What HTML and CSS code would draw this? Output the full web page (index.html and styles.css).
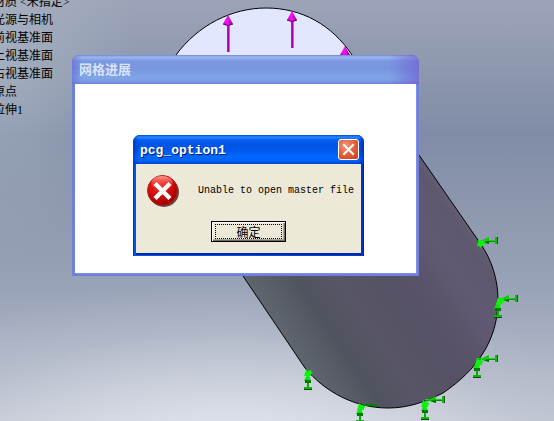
FILE: index.html
```
<!DOCTYPE html>
<html lang="zh-CN">
<head>
  <meta charset="UTF-8" />
  <meta name="viewport" content="width=device-width, initial-scale=1.0" />
  <title>网格进展</title>
  <link rel="stylesheet" href="styles.css">
</head>
<body>
  <!-- 3D model -->
  <svg class="model" width="554" height="421" viewBox="0 0 554 421" aria-hidden="true">
    <defs>
      <linearGradient id="side" gradientUnits="userSpaceOnUse" x1="275" y1="325" x2="455" y2="205">
        <stop offset="0" stop-color="#60666f" />
        <stop offset="0.2" stop-color="#50545f" />
        <stop offset="0.35" stop-color="#575566" />
        <stop offset="0.6" stop-color="#565165" />
        <stop offset="0.82" stop-color="#605972" />
        <stop offset="0.95" stop-color="#5e586f" />
        <stop offset="1" stop-color="#625d72" />
      </linearGradient>
      <linearGradient id="cone" x1="0" x2="1" y1="0" y2="0">
        <stop offset="0" stop-color="#c000c0" />
        <stop offset="0.4" stop-color="#ff10ff" />
        <stop offset="1" stop-color="#900090" />
      </linearGradient>
      <g id="force">
        <path d="M-1 9h2v28h-2z" fill="#d800d8" />
        <path d="M1 9v28" stroke="#800080" />
        <path d="M0 0l5 9q-5 3-10 0z" fill="url(#cone)" />
        <path d="M-5 9q5 3 10 0" fill="none" stroke="#700070" />
      </g>
      <g id="pin">
        <path d="M0 0h19" stroke="#009000" stroke-width="2" />
        <path d="M0 -0.500h19" stroke="#10d810" />
        <path d="M2 0l9-4v7z" fill="#00d000" />
        <path d="M5 1l6-1v3z" fill="#006800" />
        <path d="M17 -4h3v7h-3z" fill="#10b810" />
        <path d="M19.500 -4v7" stroke="#005800" />
      </g>
      <g id="pin-down">
        <path d="M0 0v18" stroke="#00b000" stroke-width="2" />
        <path d="M0 1l-4 9h7z" fill="#08e808" />
        <path d="M-3 9h6v3h-6z" fill="#007800" />
        <path d="M-4 16h8v3h-8z" fill="#10b010" />
        <path d="M-4 18.500h8" stroke="#005000" />
      </g>
      <path id="knot" d="M-1 -3l2 2 4-1-1 2 2 1-2 1 0 2-2 0-1 2-2-2-2 0 1-3z" fill="#10f010" />
    </defs>
    <path d="M243 276L305 368C325 392 355 408 388 408C408 408 425 402 443 393C477 370 498 340 498 300C498 280 492 260 480 243L419 155L300 155Z" fill="url(#side)" stroke="#000" />
    <path d="M176 55C198 25 232 8 266 8C302 8 332 25 352 55V90H176Z" fill="#e2e7ff" stroke="#000" />
    <use href="#force" x="228" y="15" />
    <use href="#force" x="292" y="11" />
    <use href="#force" x="345" y="46" />
    <use href="#pin" x="478" y="241" />
    <use href="#knot" x="480" y="242" />
    <use href="#pin" x="498" y="299" />
    <use href="#pin-down" x="498" y="299" />
    <use href="#knot" x="499" y="300" />
    <use href="#pin" x="478" y="359" />
    <use href="#pin-down" x="477" y="359" />
    <use href="#knot" x="478" y="361" />
    <use href="#pin-down" x="308" y="371" />
    <use href="#knot" x="307" y="372" />
    <use href="#pin-down" x="360" y="404" />
    <use href="#knot" x="360" y="406" />
    <path d="M363 405l8 0 7 1" fill="none" stroke="#008000" stroke-width="2" />
    <use href="#pin" x="425" y="400" />
    <use href="#pin-down" x="425" y="401" />
    <use href="#knot" x="424" y="403" />
  </svg>

  <!-- feature tree -->
  <ul class="tree">
    <li>材质 &lt;未指定&gt;</li>
    <li>光源与相机</li>
    <li>前视基准面</li>
    <li>上视基准面</li>
    <li>右视基准面</li>
    <li>原点</li>
    <li>拉伸1</li>
  </ul>

  <section class="window progress" aria-label="网格进展">
    <header class="titlebar">
      <h1>网格进展</h1>
    </header>
    <div class="window-body"></div>
  </section>

  <section class="window alert" role="alertdialog" aria-labelledby="alert-title" aria-describedby="alert-text">
    <header class="titlebar">
      <h2 id="alert-title">pcg_option1</h2>
      <button class="close" type="button" aria-label="关闭">
        <svg width="19" height="19" viewBox="0 0 19 19"><path d="M5 5l9 9M14 5l-9 9" stroke="#fff" stroke-width="2" stroke-linecap="square" /></svg>
      </button>
    </header>
    <div class="window-body">
      <div class="message">
        <svg width="32" height="32" viewBox="0 0 32 32" aria-hidden="true">
          <defs>
            <radialGradient id="ball" cx="0.4" cy="0.3" r="0.75">
              <stop offset="0" stop-color="#f03028" />
              <stop offset="0.5" stop-color="#dc0c08" />
              <stop offset="1" stop-color="#8c0000" />
            </radialGradient>
            <linearGradient id="shine" x1="0" y1="0" x2="0" y2="1">
              <stop offset="0" stop-color="#ff9a90" />
              <stop offset="1" stop-color="#f03028" stop-opacity="0" />
            </linearGradient>
          </defs>
          <circle cx="17" cy="17" r="15" fill="#3c2020" opacity="0.8" />
          <circle cx="15.500" cy="15.500" r="15" fill="url(#ball)" stroke="#b02020" />
          <ellipse cx="15" cy="8" rx="11" ry="7" fill="url(#shine)" />
          <path d="M8 8.500l15 15M23 8.500l-15 15" stroke="#fff" stroke-width="4.500" />
        </svg>
        <p id="alert-text">Unable to open master file</p>
      </div>
      <button class="ok" type="button"><span>确定</span></button>
    </div>
  </section>
</body>
</html>
```
FILE: styles.css
```
* {
  box-sizing: border-box;
}
body {
  margin: 0;
  min-height: 100vh;
  position: relative;
  overflow: hidden;
  font-family: "Liberation Mono", "Noto Sans CJK SC", monospace;
  font-size: 12px;
  color: #000;
  background:
    radial-gradient(ellipse 75% 45% at 42% 112%, #eceef3 0%, rgba(228, 231, 238, 0.6) 40%, rgba(210, 215, 225, 0.2) 75%, rgba(200, 205, 218, 0) 100%),
    radial-gradient(ellipse 25% 45% at 0% 15%, rgba(172, 184, 196, 0.7) 0%, rgba(172, 184, 196, 0) 100%),
    linear-gradient(180deg, #9ca4b8 0%, #808ca6 32%, #8c97ae 48%, #99a3b7 68%, #a9b1c2 82%, #bec3d0 100%);
}
.model {
  position: absolute;
  top: 0;
  left: 0;
}
.tree {
  position: absolute;
  top: -7px;
  left: -7px;
  margin: 0;
  padding: 0;
  list-style: none;
  font-family: "Liberation Serif", "Noto Sans CJK SC", sans-serif;
  line-height: 18px;
  white-space: nowrap;
}
.window {
  position: absolute;
  display: flex;
  flex-direction: column;
  border-radius: 7px 7px 0 0;
}
.titlebar {
  display: flex;
  align-items: center;
  justify-content: space-between;
  height: 29px;
  border-radius: 7px 7px 0 0;
}
.titlebar h1,
.titlebar h2 {
  margin: 0;
  padding-top: 3px;
  font-size: 13px;
  line-height: 16px;
  font-weight: bold;
}
.window-body {
  flex: 1;
}
.progress {
  top: 55px;
  left: 72px;
  width: 347px;
  height: 221px;
  background: #6f7fdc;
}
.progress .titlebar {
  padding: 0 7px;
  color: #d8e4f8;
  background:
    linear-gradient(90deg, rgba(104, 104, 216, 0.6) 0, rgba(104, 104, 216, 0) 10px),
    linear-gradient(270deg, rgba(112, 96, 208, 0.7) 0, rgba(112, 96, 208, 0) 30px),
    linear-gradient(180deg, #6c86dc 0, #9cb8ee 2px, #7c98e0 6px, #7894de 13px, #80a4e8 23px, #7c9ce4 26px, #6c84d8 29px);
}
.progress .window-body {
  margin: 0 3px 3px;
  background: #fff;
  box-shadow: 1px 1px 0 #8290e4;
}
.alert {
  top: 135px;
  left: 133px;
  width: 231px;
  height: 121px;
  background: linear-gradient(90deg, #0030d0 0, #0058f0 2px, #0050e8 50%, #0038d0 229px, #001898 231px);
}
.alert .titlebar {
  padding: 0 5px 0 7px;
  color: #fff;
  text-shadow: 1px 1px 0 #001c70;
  background:
    linear-gradient(90deg, rgba(0, 40, 190, 0.6) 0, rgba(0, 40, 190, 0) 6px),
    linear-gradient(270deg, rgba(0, 32, 170, 0.7) 0, rgba(0, 32, 170, 0) 6px),
    linear-gradient(180deg, #0048d8 0, #2888ff 2px, #0860f0 5px, #0054e4 9px, #0058ea 15px, #0068ff 22px, #0064fa 26px, #0040c8 29px);
}
.alert .window-body {
  margin: 0 3px 3px;
  padding: 11px 0;
  display: flex;
  flex-direction: column;
  align-items: center;
  justify-content: space-between;
  background: #ece9d8;
  box-shadow: 0 2px 0 #0028a8;
}
.close {
  display: flex;
  width: 21px;
  height: 21px;
  padding: 0;
  border: 1px solid #fff;
  border-radius: 3px;
  background: radial-gradient(circle at 35% 30%, #f09878 0, #e4603c 50%, #c83c14 100%);
}
.message {
  display: flex;
  align-items: center;
  align-self: stretch;
  gap: 19px;
  padding-left: 11px;
}
.message svg {
  flex-shrink: 0;
}
.message p {
  margin: 0;
  font-size: 10px;
  line-height: 14px;
  white-space: nowrap;
}
.ok {
  width: 75px;
  height: 21px;
  padding: 2px;
  border: 1px solid #000;
  background: #ece9d8;
  box-shadow: inset 1px 1px 0 #fff, inset -1px -1px 0 #716f64, inset -2px -2px 0 #aca899;
  font-family: "Noto Sans CJK SC", sans-serif;
  font-size: 12px;
  line-height: 13px;
  color: #000;
}
.ok span {
  display: block;
  margin: 0 1px;
  border: 1px dotted #000;
}
```
